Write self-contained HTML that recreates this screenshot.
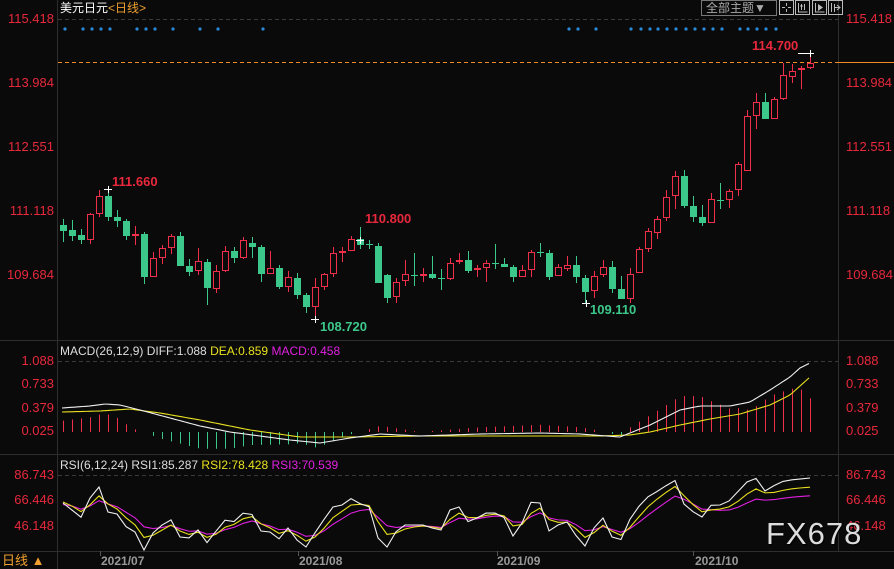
<!DOCTYPE html>
<html><head><meta charset="utf-8">
<style>
html,body{margin:0;padding:0;background:#0a0a0a;width:894px;height:569px;overflow:hidden}
body{position:relative;font-family:"Liberation Sans","Noto Sans CJK SC",sans-serif}
.t{position:absolute;white-space:nowrap;font-size:12px;line-height:14px}
.ax{position:absolute;font-size:13px;color:#e8283c;line-height:14px}
.l{right:840px;text-align:right}
.r{left:846px}
svg{position:absolute;left:0;top:0}
</style></head><body>
<svg id="s" width="894" height="569" xmlns="http://www.w3.org/2000/svg">
<g stroke="#2e2e2e" stroke-width="1">
<line x1="57.5" y1="0" x2="57.5" y2="569"/>
<line x1="838.5" y1="0" x2="838.5" y2="551"/>
<line x1="0" y1="340.5" x2="894" y2="340.5"/>
<line x1="0" y1="454.5" x2="894" y2="454.5"/>
<line x1="0" y1="551.5" x2="894" y2="551.5"/>
</g>
<g stroke="#3a3a3a" stroke-dasharray="4,3">
<line x1="58" y1="19.5" x2="838" y2="19.5"/>
<line x1="58" y1="361.5" x2="838" y2="361.5"/>
<line x1="58" y1="475.5" x2="838" y2="475.5"/>
</g>
<line x1="58" y1="62.5" x2="838" y2="62.5" stroke="#f08a24" stroke-dasharray="4,3"/>
<line x1="838" y1="62.5" x2="894" y2="62.5" stroke="#f08a24"/>
<g id="dyn"></g>
<rect x="701.5" y="0.5" width="75" height="15" fill="none" stroke="#777"/>
<g fill="none" stroke="#bbb">
<rect x="779.5" y="0.5" width="14" height="14"/>
<rect x="795.5" y="0.5" width="14" height="14"/>
<rect x="812.5" y="0.5" width="14" height="14"/>
<rect x="828.5" y="0.5" width="14" height="14"/>
<path d="M786.5 3v3M786.5 9v3M782 7.5h3M788 7.5h3"/>
<path d="M798.5 3v9h9M801.5 4v6M804.5 4v6M800 6h3"/>
<path d="M815.5 3v9h9"/>
<path d="M831.5 3v9M834.5 4v8"/>
</g>
<path d="M818 4l5 3.5-5 3.5z" fill="#bbb"/>
<path d="M834 7.5h5M837 5l3 2.5-3 2.5" stroke="#bbb" fill="none"/>
<g stroke="#555"><line x1="100.5" y1="551" x2="100.5" y2="556"/><line x1="298.5" y1="551" x2="298.5" y2="556"/><line x1="497.5" y1="551" x2="497.5" y2="556"/><line x1="693.5" y1="551" x2="693.5" y2="556"/></g>
</svg>

<div class="t" style="left:60px;top:1px;color:#fff">美元日元<span style="color:#f0a030">&lt;日线&gt;</span></div>
<div class="t" style="left:706px;top:1px;color:#aaa;font-size:12px">全部主题▼</div>

<div class="ax l" style="top:12px">115.418</div><div class="ax r" style="top:12px">115.418</div>
<div class="ax l" style="top:76px">113.984</div><div class="ax r" style="top:76px">113.984</div>
<div class="ax l" style="top:140px">112.551</div><div class="ax r" style="top:140px">112.551</div>
<div class="ax l" style="top:204px">111.118</div><div class="ax r" style="top:204px">111.118</div>
<div class="ax l" style="top:268px">109.684</div><div class="ax r" style="top:268px">109.684</div>

<div class="ax l" style="top:354px">1.088</div><div class="ax r" style="top:354px">1.088</div>
<div class="ax l" style="top:377px">0.733</div><div class="ax r" style="top:377px">0.733</div>
<div class="ax l" style="top:401px">0.379</div><div class="ax r" style="top:401px">0.379</div>
<div class="ax l" style="top:424px">0.025</div><div class="ax r" style="top:424px">0.025</div>

<div class="ax l" style="top:468px">86.743</div><div class="ax r" style="top:468px">86.743</div>
<div class="ax l" style="top:493px">66.446</div><div class="ax r" style="top:493px">66.446</div>
<div class="ax l" style="top:519px">46.148</div><div class="ax r" style="top:519px">46.148</div>

<div class="t" style="left:60px;top:344px;color:#ddd">MACD(26,12,9) DIFF:1.088 <span style="color:#e8e020">DEA:0.859</span> <span style="color:#e020e0">MACD:0.458</span></div>
<div class="t" style="left:60px;top:458px;color:#ddd">RSI(6,12,24) RSI1:85.287 <span style="color:#e8e020">RSI2:78.428</span> <span style="color:#e020e0">RSI3:70.539</span></div>

<div class="t" style="left:112px;top:175px;color:#e8283c;font-weight:bold;font-size:13px">111.660</div>
<div class="t" style="left:365px;top:212px;color:#e8283c;font-weight:bold;font-size:13px">110.800</div>
<div class="t" style="left:320px;top:320px;color:#3cc88a;font-weight:bold;font-size:13px">108.720</div>
<div class="t" style="left:590px;top:303px;color:#3cc88a;font-weight:bold;font-size:13px">109.110</div>
<div class="t" style="left:752px;top:39px;color:#e8283c;font-weight:bold;font-size:13px">114.700</div>

<div class="t" style="left:101px;top:554px;color:#999;font-weight:bold">2021/07</div>
<div class="t" style="left:299px;top:554px;color:#999;font-weight:bold">2021/08</div>
<div class="t" style="left:497px;top:554px;color:#999;font-weight:bold">2021/09</div>
<div class="t" style="left:695px;top:554px;color:#999;font-weight:bold">2021/10</div>
<div class="t" style="left:2px;top:554px;color:#f0a030;font-size:13px">日线 ▲</div>
<div class="t" style="left:766px;top:518px;color:#ddd;font-size:31px;line-height:32px;letter-spacing:1px;text-shadow:1px 1px 1px #000">FX678</div>

<script>
var NS="http://www.w3.org/2000/svg",G=document.getElementById("dyn");
function el(n,a){var e=document.createElementNS(NS,n);for(var k in a)e.setAttribute(k,a[k]);G.appendChild(e);return e;}
[65,83,92,101,110,137,146,155,173,200,218,263,569,578,596,631,641,650,658,667,676,686,695,704,713,722,740,748,757,766,776].forEach(function(x){el("circle",{cx:x,cy:29,r:1.6,fill:"#2a8ad8"});});
var z5=[[25,165,183,147,215,0],[52,180,198,150,212,0],[79,195,210,177,222,0],[106,132,209,128,222,1],[133,78,131,60,140,1],[160,78,141,55,152,0],[187,141,153,120,171,0],[214,153,197,147,210,0],[241,192,197,168,225,1],[268,192,320,185,341,0],[295,265,320,246,320,1],[322,235,263,226,282,1],[349,199,233,192,251,1],[376,198,287,186,287,0],[403,288,306,267,318,0],[430,273,302,234,314,1],[457,276,353,268,405,0],[484,303,356,285,368,1],[511,243,302,228,305,1],[538,243,264,232,279,0],[565,210,264,201,267,1],[592,219,231,201,265,0],[619,231,312,225,336,0],[646,295,311,243,313,1],[673,294,351,285,356,0],[700,321,350,303,366,1],[727,324,375,309,387,0],[754,375,410,369,429,0],[781,351,410,324,450,1],[808,313,350,309,359,1],[835,249,311,231,320,1]];
var z6=[[37,153,158,141,186,1],[64,118,152,108,152,1],[91,118,134,80,146,0],[118,133,135,120,146,0],[145,138,248,130,248,0],[172,226,293,222,308,0],[199,246,292,234,308,1],[226,222,244,180,257,1],[253,225,227,160,257,0],[280,221,228,205,245,1],[307,222,233,168,237,0],[334,234,238,207,269,0],[361,190,238,173,240,1],[388,180,187,158,192,1],[415,180,212,153,218,0],[442,205,211,195,230,1],[469,189,203,180,245,1],[496,188,190,132,206,0],[523,192,200,175,200,0],[550,202,230,195,245,0],[577,211,230,195,230,1],[604,157,209,150,230,1],[631,156,158,129,170,0],[658,160,230,150,240,0],[685,202,229,192,229,1],[712,196,208,168,212,1],[739,195,232,168,250,0],[766,234,275,226,310,0],[793,229,274,212,293,1],[820,202,226,180,232,1],[847,201,266,184,280,0],[874,267,296,229,296,0]];
var z7=[[91,643,716,625,728,1],[118,568,640,562,640,1],[145,514,566,505,575,1],[172,478,520,468,536,1],[199,412,475,390,482,1],[226,349,409,333,446,1],[253,349,437,330,443,0],[280,438,470,408,485,0],[307,471,488,435,497,0],[334,418,488,400,490,1],[361,419,421,370,446,0],[388,394,421,386,443,1],[415,313,391,306,407,1],[442,169,332,150,332,1],[469,127,167,99,206,1],[496,127,176,99,176,0],[523,118,176,111,176,1],[550,46,116,10,119,1],[577,34,50,12,68,1],[604,25,31,18,86,1]];
var C=[];
z5.forEach(function(c){C.push([55+c[0]/3,170+c[1]/3,170+c[2]/3,170+c[3]/3,170+c[4]/3,c[5]]);});
z6.forEach(function(c){C.push([330+c[0]/3,200+c[1]/3,200+c[2]/3,200+c[3]/3,200+c[4]/3,c[5]]);});
z7.forEach(function(c){C.push([600+c[0]/3,60+c[1]/3,60+c[2]/3,60+c[3]/3,60+c[4]/3,c[5]]);});
C.push([810.5,63,68,53,69,1]);
C.forEach(function(c,i){
 var x=Math.round(63+i*9)+0.5,col=c[5]?"#f0304a":"#3cc88a";
 var bt=Math.round(c[1]),bb=Math.round(c[2]);
 el("line",{x1:x,y1:Math.round(c[3]),x2:x,y2:bt,stroke:col});
 el("line",{x1:x,y1:bb,x2:x,y2:Math.round(c[4]),stroke:col});
 if(bb-bt<2){el("line",{x1:x-3.5,y1:bt+0.5,x2:x+3.5,y2:bt+0.5,stroke:col});}
 else if(c[5]) el("rect",{x:x-3,y:bt+0.5,width:6,height:bb-bt-1,fill:"none",stroke:col});
 else el("rect",{x:x-3.5,y:bt,width:7,height:bb-bt,fill:col});
});
[[108,189],[360,240],[315,319],[586,303],[810,53]].forEach(function(p){el("path",{d:"M"+(p[0]-4)+" "+(p[1]+.5)+"h8M"+(p[0]+.5)+" "+(p[1]-3)+"v7",stroke:"#fff"});});
el("line",{x1:798,y1:53.5,x2:810,y2:53.5,stroke:"#fff"});
function interp(pts,x){for(var i=1;i<pts.length;i++){if(x<=pts[i][0]){var a=pts[i-1],b=pts[i];return a[1]+(b[1]-a[1])*(x-a[0])/(b[0]-a[0]);}}return pts[pts.length-1][1];}
var diff=[[62,408],[90,406],[105,404],[120,405],[140,410],[170,418],[200,426],[230,432],[260,436],[290,440],[320,443],[350,438],[380,434],[420,436],[480,434],[540,433],[580,434],[620,437],[650,425],[680,410],[700,406],[730,406],[750,402],[770,390],[790,377],[800,368],[810,363]];
var dea=[[62,412],[100,411],[130,409],[160,413],[200,420],[250,430],[300,437],[350,437],[420,436],[500,436],[600,436],[630,435],[650,432],[680,425],[710,419],[740,414],[770,405],[790,395],[810,377]];
for(var i=0;i<84;i++){var x=63+i*9,v=(interp(dea,x)-interp(diff,x))*(x<320?2.8:2.4),xx=Math.round(x)+0.5;
 if(Math.abs(v)<0.8)continue;
 el("line",{x1:xx,y1:432,x2:xx,y2:432-v,stroke:v>0?"#f0304a":"#3cc88a"});}
function pl(pts,col){var d=pts.map(function(p){return p[0]+","+p[1];}).join(" ");el("polyline",{points:d,fill:"none",stroke:col,"stroke-width":1.1});}
var dp=[],ep=[];for(var x=62;x<=810;x+=3){dp.push([x,interp(diff,x)]);ep.push([x,interp(dea,x)]);}
pl(ep,"#e8e020");pl(dp,"#f0f0f0");
var w=[[63,503],[82,518],[92,493],[99,487],[108,512],[117,514],[127,528],[133,528],[144,550],[153,533],[170,518],[180,537],[190,538],[198,530],[208,544],[218,528],[227,518],[235,522],[245,511],[253,515],[262,533],[270,532],[278,540],[288,528],[297,540],[306,547],[320,525],[333,507],[342,505],[352,498],[362,505],[370,507],[378,538],[387,547],[397,530],[405,525],[423,525],[432,528],[441,530],[450,510],[459,507],[467,522],[477,518],[488,512],[495,513],[505,518],[513,536],[522,523],[532,500],[540,503],[550,534],[558,525],[567,522],[577,537],[585,546],[593,529],[603,518],[612,537],[620,542],[628,522],[642,502],[650,495],[660,490],[667,485],[676,480],[685,507],[702,517],[712,504],[720,505],[728,502],[747,482],[755,477],[765,491],[780,482],[790,480],[810,478]];
var wp=[],yp=[],mp=[],ya=null,ma=null;
for(var i=0;i<84;i++){var x=63+i*9,y=interp(w,x);if(ya===null){ya=y-2;ma=y+2;}
 ya=ya+(y-ya)*0.5;ma=ma+(y-ma)*0.28;
 wp.push([x,y]);yp.push([x,ya]);mp.push([x,ma]);}
for(var i=0;i<84;i++){var t=Math.max(0,(i-68)/15);yp[i][1]+=t*8;mp[i][1]+=t*14;}
pl(mp,"#e020e0");pl(yp,"#e8e020");pl(wp,"#f0f0f0");
</script>
</body></html>
